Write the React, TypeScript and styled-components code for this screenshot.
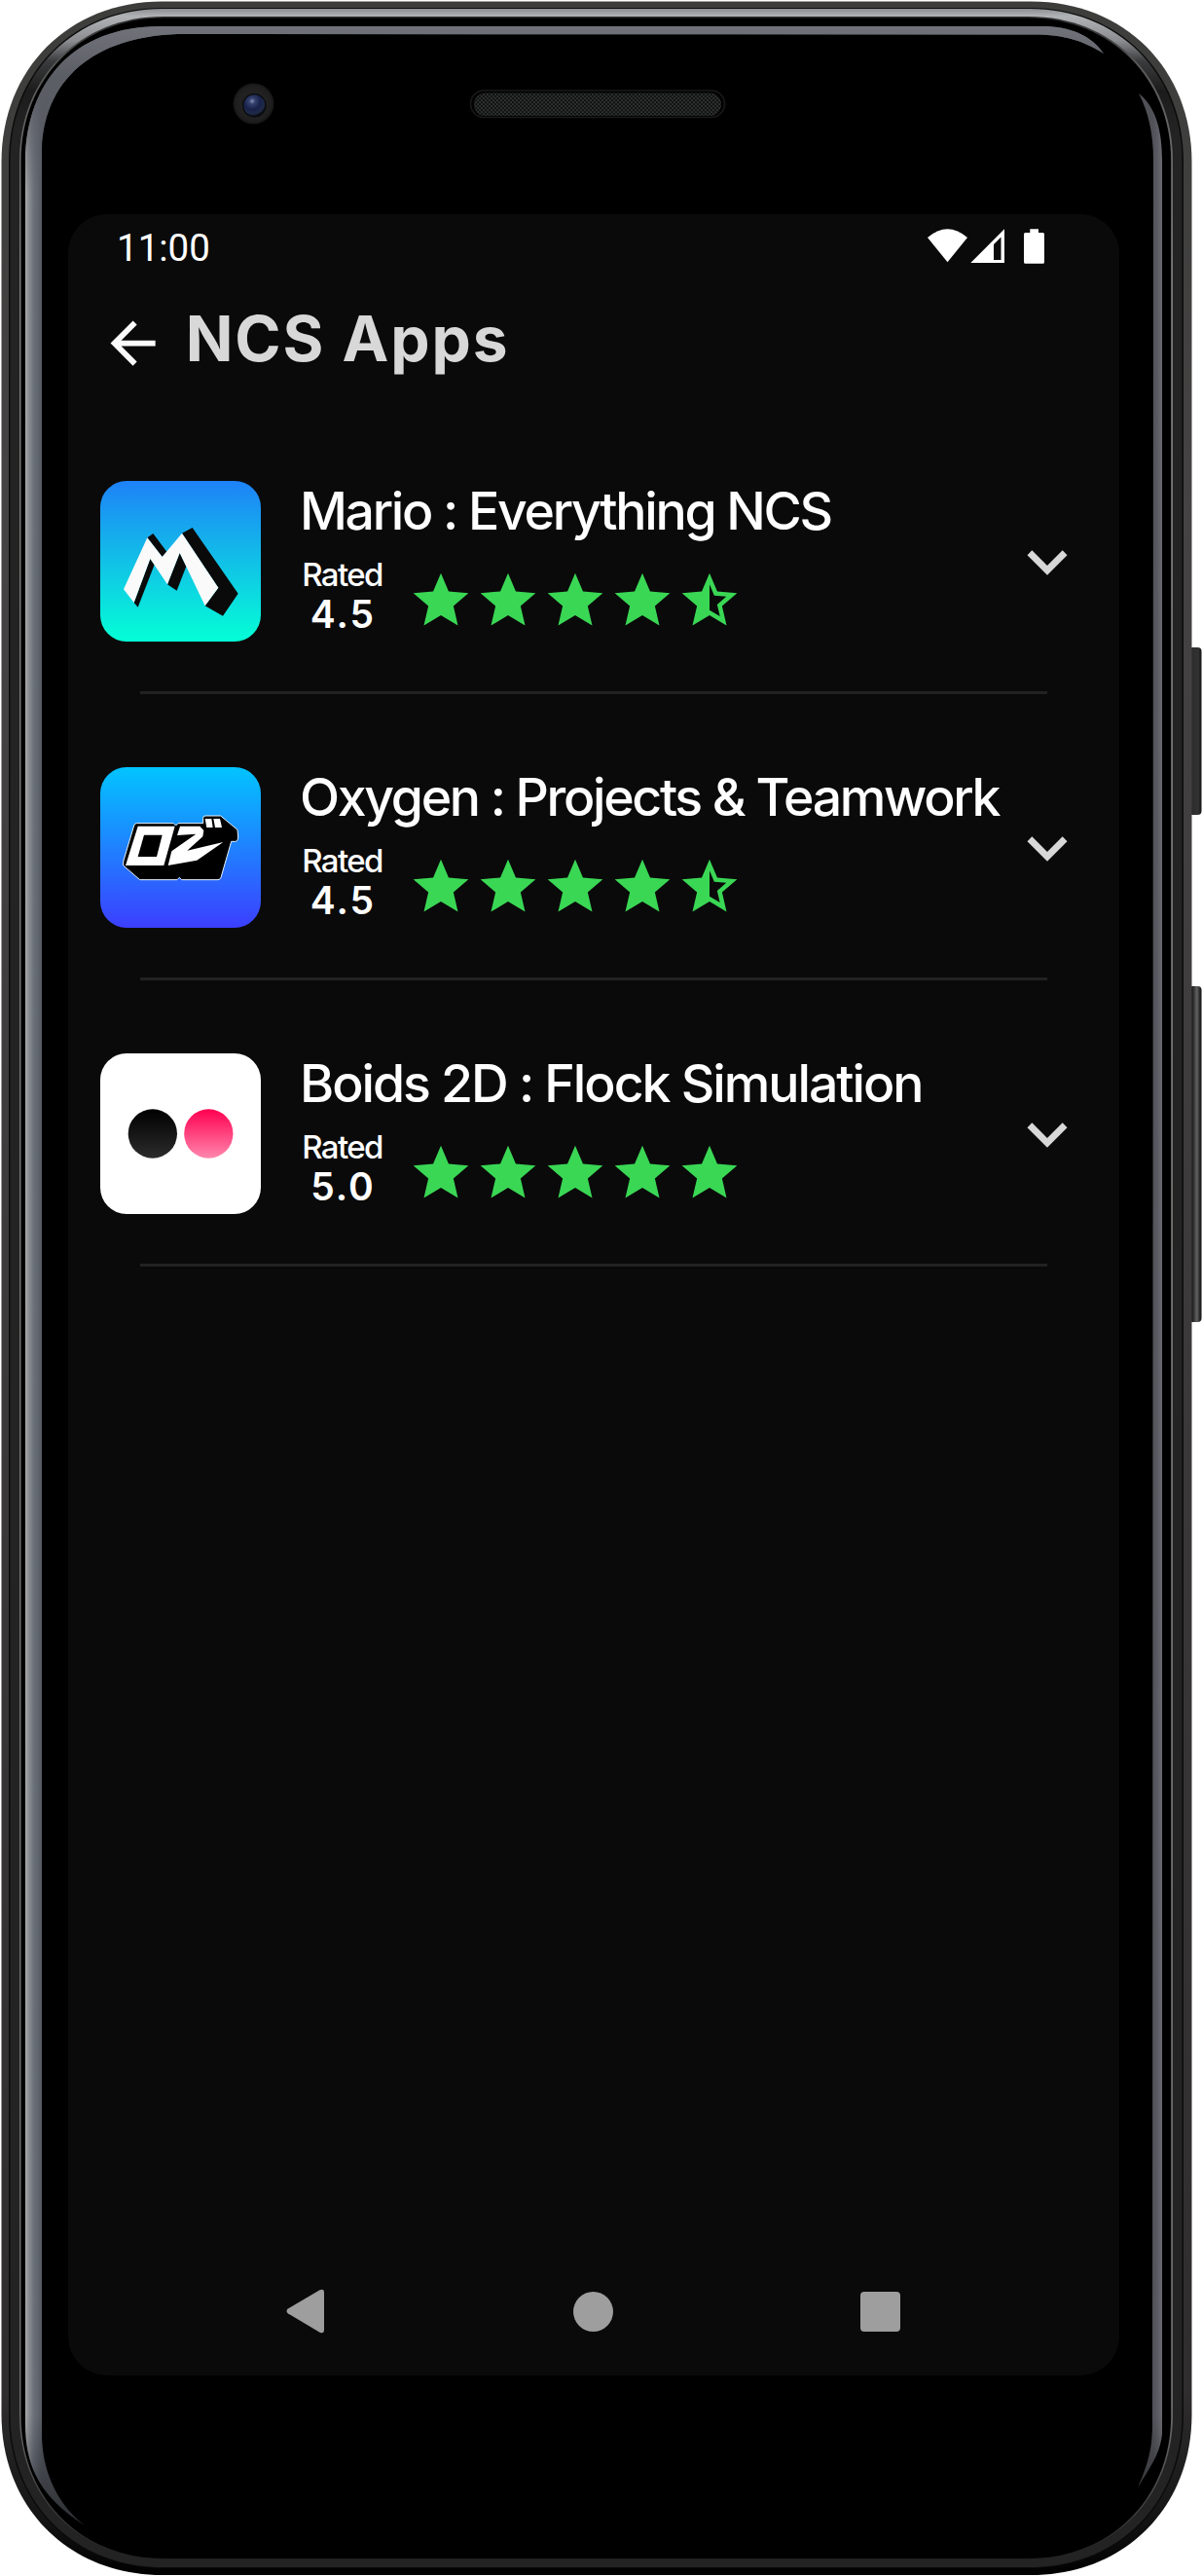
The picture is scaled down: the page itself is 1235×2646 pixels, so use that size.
import React from 'react';
import styled, { createGlobalStyle } from 'styled-components';

const GlobalStyle = createGlobalStyle`
  html, body { margin: 0; padding: 0; background: #fff; }
  * { box-sizing: border-box; }
`;

const Device = styled.div`
  position: relative;
  width: 1235px;
  height: 2646px;
  padding: 220px 85px 206px 70px;
  overflow: hidden;
`;

const Shell = styled.svg`
  position: absolute;
  inset: 0;
  display: block;
`;

const Screen = styled.main`
  position: relative;
  display: flex;
  flex-direction: column;
  width: 1080px;
  height: 2220px;
  border-radius: 40px;
  background: #0a0a0a;
  color: #fff;
  font-family: Inter, 'Liberation Sans', sans-serif;
`;

const StatusBar = styled.header`
  display: flex;
  justify-content: space-between;
  align-items: flex-start;
  height: 82px;
  padding: 15px 76px 0 50px;
`;

const Clock = styled.span`
  font-family: Roboto, sans-serif;
  font-size: 38.5px;
  line-height: 40px;
`;

const StatusIcons = styled.svg`
  display: block;
  width: 122px;
  height: 37px;
`;

const TopBar = styled.div`
  display: flex;
  align-items: center;
  height: 102px;
  padding-left: 32px;
`;

const BackIcon = styled.svg`
  display: block;
  width: 69.2px;
  height: 69.2px;
  fill: #fafafa;
`;

const Heading = styled.h1`
  margin: -11px 0 0 19.5px;
  font-size: 64px;
  line-height: 78px;
  font-weight: 700;
  letter-spacing: 1.9px;
  color: #d8d8d8;
  white-space: nowrap;
`;

const List = styled.ul`
  display: flex;
  flex-direction: column;
  flex: 1;
  gap: 75px;
  margin: 0;
  padding: 90px 0 0;
  list-style: none;
`;

const Item = styled.li`
  display: flex;
  flex-direction: column;
  gap: 51px;
`;

const ItemRow = styled.div`
  display: flex;
  height: 165px;
  padding: 0 33.5px 0 33px;
`;

const AppIcon = styled.div<{ $fill: string }>`
  flex: none;
  width: 165px;
  height: 165px;
  border-radius: 27px;
  background: ${(p) => p.$fill};
  overflow: hidden;
  svg { display: block; width: 165px; height: 165px; }
`;

const Details = styled.div`
  flex: 1;
  min-width: 0;
  margin: -1px 0 0 40px;
`;

const AppName = styled.h2<{ $spacing: number }>`
  margin: 0;
  font-size: 53.6px;
  line-height: 64px;
  font-weight: 500;
  letter-spacing: ${(p) => p.$spacing}px;
  white-space: nowrap;
`;

const Rating = styled.div`
  display: flex;
  align-items: flex-start;
  padding-top: 15px;
`;

const Score = styled.div`
  display: flex;
  flex-direction: column;
  align-items: center;
  width: 87px;
`;

const ScoreLabel = styled.span`
  font-size: 33px;
  line-height: 37px;
  font-weight: 500;
  letter-spacing: -1.6px;
`;

const ScoreValue = styled.span`
  font-size: 39px;
  line-height: 43px;
  font-weight: 600;
  letter-spacing: 2px;
  padding-left: 2px;
`;

const Stars = styled.div`
  display: flex;
  gap: 1px;
  margin: 11.3px 0 0 24.3px;
  svg { display: block; width: 68px; height: 68px; fill: #3ad755; }
`;

const Chevron = styled.svg`
  flex: none;
  align-self: center;
  width: 82px;
  height: 82px;
  margin-left: -82px;
  fill: #d8d8d8;
`;

const Divider = styled.hr`
  width: 932px;
  height: 3px;
  margin: 0 0 0 74px;
  border: 0;
  background: #222;
`;

const NavBar = styled.nav`
  display: flex;
  justify-content: space-between;
  align-items: center;
  height: 131.5px;
  padding: 0 225px 0 224px;
  svg { display: block; fill: #9e9e9e; }
`;

const STAR =
  'M12 17.27L18.18 21l-1.64-7.03L22 9.24l-7.19-.61L12 2 9.19 8.63 2 9.24l5.46 4.73L5.82 21z';
const HALF_STAR =
  'M22 9.24l-7.19-.62L12 2 9.19 8.63 2 9.24l5.46 4.73L5.82 21 12 17.27 18.18 21l-1.63-7.03L22 9.24zM12 15.4V6.1l1.71 4.04 4.38.38-3.32 2.88 1 4.28L12 15.4z';

const MarioLogo = () => (
  <svg viewBox="39 72 495 495">
    <g fill="#0a0a0a">
      <path d="M184 247L202 234L244 290L230 306Z" />
      <path d="M193 312L206 330L155 461L143 447Z" />
      <path d="M284 294L304 335L275 410L246 391Z" />
      <path d="M291 233L323 216L464 419L417 488L362 457L403 401Z" />
    </g>
    <path
      fill="#fafafa"
      d="M184 247L230 306L291 233L403 401L362 457L284 294L246 391L193 312L143 447L111 406Z"
    />
  </svg>
);

const OxygenLogo = () => (
  <svg viewBox="39 84 495 495">
    <path
      d="M151 257H265L272 264L279 257H356V241Q356 234 363 234H410L462 277L464 300Q463 313 455 313H443L411 424Q409 431 402 431H290L283 424L276 431H161L110 387V375L143 264Q145 257 151 257Z"
      fill="#000"
      stroke="#e8f4ff"
      strokeWidth="3"
      strokeLinejoin="round"
    />
    <path
      fill="#fff"
      fillRule="evenodd"
      d="M155 266H269L235 387H117ZM174 293L155 360H213L230 293Z"
    />
    <path
      fill="#fff"
      d="M285 266H346L358 279L355 298L307 341L418 315L337 371L248 387L259 343L334 290L276 294Z"
    />
    <path fill="#fff" d="M362 243H382L386 270H367ZM388 243H408L414 270H393Z" />
  </svg>
);

const BoidsLogo = () => (
  <svg viewBox="39 66 495 495">
    <defs>
      <linearGradient id="boidDark" x2="0" y2="1">
        <stop stopColor="#000" />
        <stop offset="1" stopColor="#2c2c2c" />
      </linearGradient>
      <linearGradient id="boidPink" x2="0" y2="1">
        <stop stopColor="#ff0050" />
        <stop offset="1" stopColor="#ff86ad" />
      </linearGradient>
    </defs>
    <circle cx="200.5" cy="313.5" r="75.5" fill="url(#boidDark)" />
    <circle cx="373" cy="313.5" r="75.5" fill="url(#boidPink)" />
  </svg>
);

interface AppEntry {
  name: string;
  score: number;
  fill: string;
  spacing: number;
  logo: React.ReactNode;
}

const APPS: AppEntry[] = [
  {
    name: 'Mario : Everything NCS',
    score: 4.5,
    fill: 'linear-gradient(#1e82f8, #04ffd6)',
    spacing: -2.3,
    logo: <MarioLogo />,
  },
  {
    name: 'Oxygen : Projects & Teamwork',
    score: 4.5,
    fill: 'linear-gradient(#02c4ff, #3c3fff)',
    spacing: -2.33,
    logo: <OxygenLogo />,
  },
  {
    name: 'Boids 2D : Flock Simulation',
    score: 5,
    fill: '#fff',
    spacing: -2.05,
    logo: <BoidsLogo />,
  },
];

/* Rounded outline of one frame layer, given its edges and corner radius. */
const ring = (l: number, t: number, r: number, b: number, rad: number) => {
  const k = rad * 0.42;
  return `M${l + rad} ${t}H${r - rad}C${r - k} ${t} ${r} ${t + k} ${r} ${t + rad}V${b - rad}C${r} ${b - k} ${r - k} ${b} ${r - rad} ${b}H${l + rad}C${l + k} ${b} ${l} ${b - k} ${l} ${b - rad}V${t + rad}C${l} ${t + k} ${l + k} ${t} ${l + rad} ${t}Z`;
};

const DeviceShell = () => (
  <Shell width="1235" height="2646" viewBox="0 0 1235 2646" aria-hidden="true">
    <defs>
      <linearGradient id="edge" gradientUnits="userSpaceOnUse" x1="0" y1="0" x2="0" y2="2646">
        <stop stopColor="#3d3d3c" />
        <stop offset="0.2" stopColor="#454343" />
        <stop offset="0.93" stopColor="#2f2d2e" />
        <stop offset="0.975" stopColor="#161616" />
        <stop offset="1" stopColor="#000" />
      </linearGradient>
      <linearGradient id="rim" gradientUnits="userSpaceOnUse" x1="0" y1="8" x2="0" y2="130">
        <stop stopColor="#86888c" />
        <stop offset="0.07" stopColor="#b0b2b5" />
        <stop offset="0.28" stopColor="#8a8c90" />
        <stop offset="0.45" stopColor="#3a3b3d" />
        <stop offset="0.7" stopColor="#1c1c1c" />
        <stop offset="1" stopColor="#232323" />
      </linearGradient>
      <linearGradient id="hairline" gradientUnits="userSpaceOnUse" x1="0" y1="16" x2="0" y2="2630">
        <stop stopColor="#2a2a2a" />
        <stop offset="0.02" stopColor="#5a5a5a" />
        <stop offset="0.1" stopColor="#7c7c7a" />
        <stop offset="0.94" stopColor="#6c6c6c" />
        <stop offset="0.985" stopColor="#3c3c3c" />
        <stop offset="1" stopColor="#1c1c1c" />
      </linearGradient>
      <linearGradient id="glareLeft" gradientUnits="userSpaceOnUse" x1="26" y1="0" x2="43" y2="0">
        <stop stopColor="#a9a9a9" />
        <stop offset="0.2" stopColor="#8c8f94" />
        <stop offset="0.5" stopColor="#6c727c" />
        <stop offset="1" stopColor="#555961" />
      </linearGradient>
      <linearGradient id="glareTop" gradientUnits="userSpaceOnUse" x1="0" y1="27" x2="0" y2="200">
        <stop stopColor="#72737a" />
        <stop offset="0.3" stopColor="#5c5e65" />
        <stop offset="1" stopColor="#5c5e65" stopOpacity="0" />
      </linearGradient>
      <linearGradient id="glareRight" gradientUnits="userSpaceOnUse" x1="1184" y1="0" x2="1194" y2="0">
        <stop stopColor="#505157" />
        <stop offset="0.5" stopColor="#5a5b62" />
        <stop offset="1" stopColor="#6b6c72" />
      </linearGradient>
      <linearGradient id="fadeDown" gradientUnits="userSpaceOnUse" x1="0" y1="2480" x2="0" y2="2600">
        <stop stopColor="#000" stopOpacity="0" />
        <stop offset="1" stopColor="#000" stopOpacity="0.5" />
      </linearGradient>
      <linearGradient id="powerKey">
        <stop stopColor="#111" />
        <stop offset="0.25" stopColor="#2c2c2c" />
        <stop offset="0.75" stopColor="#323232" />
        <stop offset="1" stopColor="#111" />
      </linearGradient>
      <linearGradient id="volumeKey">
        <stop stopColor="#111" />
        <stop offset="0.3" stopColor="#1e1e1e" />
        <stop offset="0.65" stopColor="#626262" />
        <stop offset="0.85" stopColor="#2c2c2c" />
        <stop offset="1" stopColor="#0c0c0c" />
      </linearGradient>
      <radialGradient id="bezel">
        <stop stopColor="#262626" />
        <stop offset="0.85" stopColor="#1f1f1f" />
        <stop offset="1" stopColor="#141414" />
      </radialGradient>
      <radialGradient id="lens" cx="0.4" cy="0.3" r="0.7">
        <stop stopColor="#8592b8" />
        <stop offset="0.2" stopColor="#35416d" />
        <stop offset="0.55" stopColor="#18214a" />
        <stop offset="0.85" stopColor="#202b48" />
        <stop offset="1" stopColor="#0a0d18" />
      </radialGradient>
      <pattern id="mesh" width="4" height="4" patternUnits="userSpaceOnUse">
        <rect width="4" height="4" fill="#121313" />
        <circle cx="1" cy="1" r="0.85" fill="#464848" />
        <circle cx="3" cy="3" r="0.85" fill="#464848" />
      </pattern>
    </defs>

    <rect x="1221" y="665" width="13.5" height="172" rx="4" fill="url(#powerKey)" />
    <rect x="1221" y="1013" width="13.5" height="345" rx="4" fill="url(#volumeKey)" />

    <path d={ring(1.5, 1.5, 1224.5, 2645, 165)} fill="url(#edge)" />
    <path d={ring(9, 8, 1216, 2638, 158)} fill="#0b0b0b" />
    <path d={ring(10.5, 9, 1214.5, 2637, 157)} fill="url(#rim)" />
    <path d={ring(20, 17, 1205, 2628.5, 148)} fill="url(#hairline)" />
    <path d={ring(21.5, 18.5, 1203.2, 2628, 147)} fill="#000" />

    <path
      d="M87 2594C47 2568 26 2540 26 2490V165C27 85 75 27 165 27H1076C1105 29 1122 38 1134 55C1115 43 1095 35.5 1062 35.5L190 35C105 35 46 75 43 153V2500C43 2540 60 2574 87 2594Z"
      fill="url(#glareLeft)"
    />
    <path
      d="M26 165C27 85 75 27 165 27H1076C1105 29 1122 38 1134 55C1115 43 1095 35.5 1062 35.5L190 35C105 35 46 75 43 153V200H26Z"
      fill="url(#glareTop)"
    />
    <path
      d="M1170 96C1188 110 1194 135 1194 165V2500C1192 2520 1183 2532 1169 2555C1180 2530 1184 2515 1184 2490L1185 165C1185 138 1180 115 1170 96Z"
      fill="url(#glareRight)"
    />
    <path
      d="M87 2594C47 2568 26 2540 26 2490V2480H43V2500C43 2540 60 2574 87 2594ZM1194 2480V2500C1192 2520 1183 2532 1169 2555C1180 2530 1184 2515 1184 2490V2480Z"
      fill="url(#fadeDown)"
    />

    <circle cx="260.5" cy="106.5" r="21" fill="url(#bezel)" />
    <circle cx="261.3" cy="108.3" r="12.2" fill="#08090c" />
    <circle cx="261.3" cy="108.3" r="11" fill="url(#lens)" />

    <rect x="483.5" y="93" width="261" height="27.5" rx="13.7" fill="#020202" stroke="#1a1a1d" strokeWidth="1.5" />
    <rect x="487" y="95.5" width="254" height="23.5" rx="11.5" fill="url(#mesh)" />
  </Shell>
);

const StarRow = ({ score }: { score: number }) => (
  <Stars>
    {[1, 2, 3, 4, 5].map((n) => (
      <svg key={n} viewBox="0 0 24 24">
        <path d={score >= n ? STAR : HALF_STAR} />
      </svg>
    ))}
  </Stars>
);

export default function App() {
  return (
    <>
      <GlobalStyle />
      <Device>
        <DeviceShell />
        <Screen>
          <StatusBar>
            <Clock>11:00</Clock>
            <StatusIcons viewBox="952 235 122 37" fill="#fff">
              <path d="M953 244Q973.5 226.5 994 244L973.5 269.3Z" />
              <path fillRule="evenodd" d="M1032 235.3V270H997.3ZM1028.500 243.500L1021 251V267H1028.500Z" />
              <path d="M1058.300 235.300H1067V239H1071.500Q1073 239 1073 240.500V269.200Q1073 270.700 1071.500 270.700H1053.500Q1052 270.700 1052 269.200V240.500Q1052 239 1053.500 239H1058.300Z" />
            </StatusIcons>
          </StatusBar>
          <TopBar>
            <BackIcon viewBox="0 0 24 24">
              <path d="M20 11H7.83l5.59-5.59L12 4l-8 8 8 8 1.41-1.41L7.83 13H20z" />
            </BackIcon>
            <Heading>NCS Apps</Heading>
          </TopBar>
          <List>
            {APPS.map((app) => (
              <Item key={app.name}>
                <ItemRow>
                  <AppIcon $fill={app.fill}>{app.logo}</AppIcon>
                  <Details>
                    <AppName $spacing={app.spacing}>{app.name}</AppName>
                    <Rating>
                      <Score>
                        <ScoreLabel>Rated</ScoreLabel>
                        <ScoreValue>{app.score.toFixed(1)}</ScoreValue>
                      </Score>
                      <StarRow score={app.score} />
                    </Rating>
                  </Details>
                  <Chevron viewBox="0 0 24 24">
                    <path d="M7.41 8.59L12 13.17l4.59-4.58L18 10l-6 6-6-6z" />
                  </Chevron>
                </ItemRow>
                <Divider />
              </Item>
            ))}
          </List>
          <NavBar>
            <svg width="40" height="46" viewBox="0 0 40 46">
              <path d="M34.5 1.3Q39 -0.8 39 4V42Q39 46.600 34.500 44.700L1.800 25.300Q-0.800 23 1.800 20.500Z" />
            </svg>
            <svg width="41" height="41" viewBox="0 0 41 41">
              <circle cx="20.5" cy="20.5" r="20.5" />
            </svg>
            <svg width="41" height="41" viewBox="0 0 41 41">
              <rect width="41" height="41" rx="4" />
            </svg>
          </NavBar>
        </Screen>
      </Device>
    </>
  );
}
